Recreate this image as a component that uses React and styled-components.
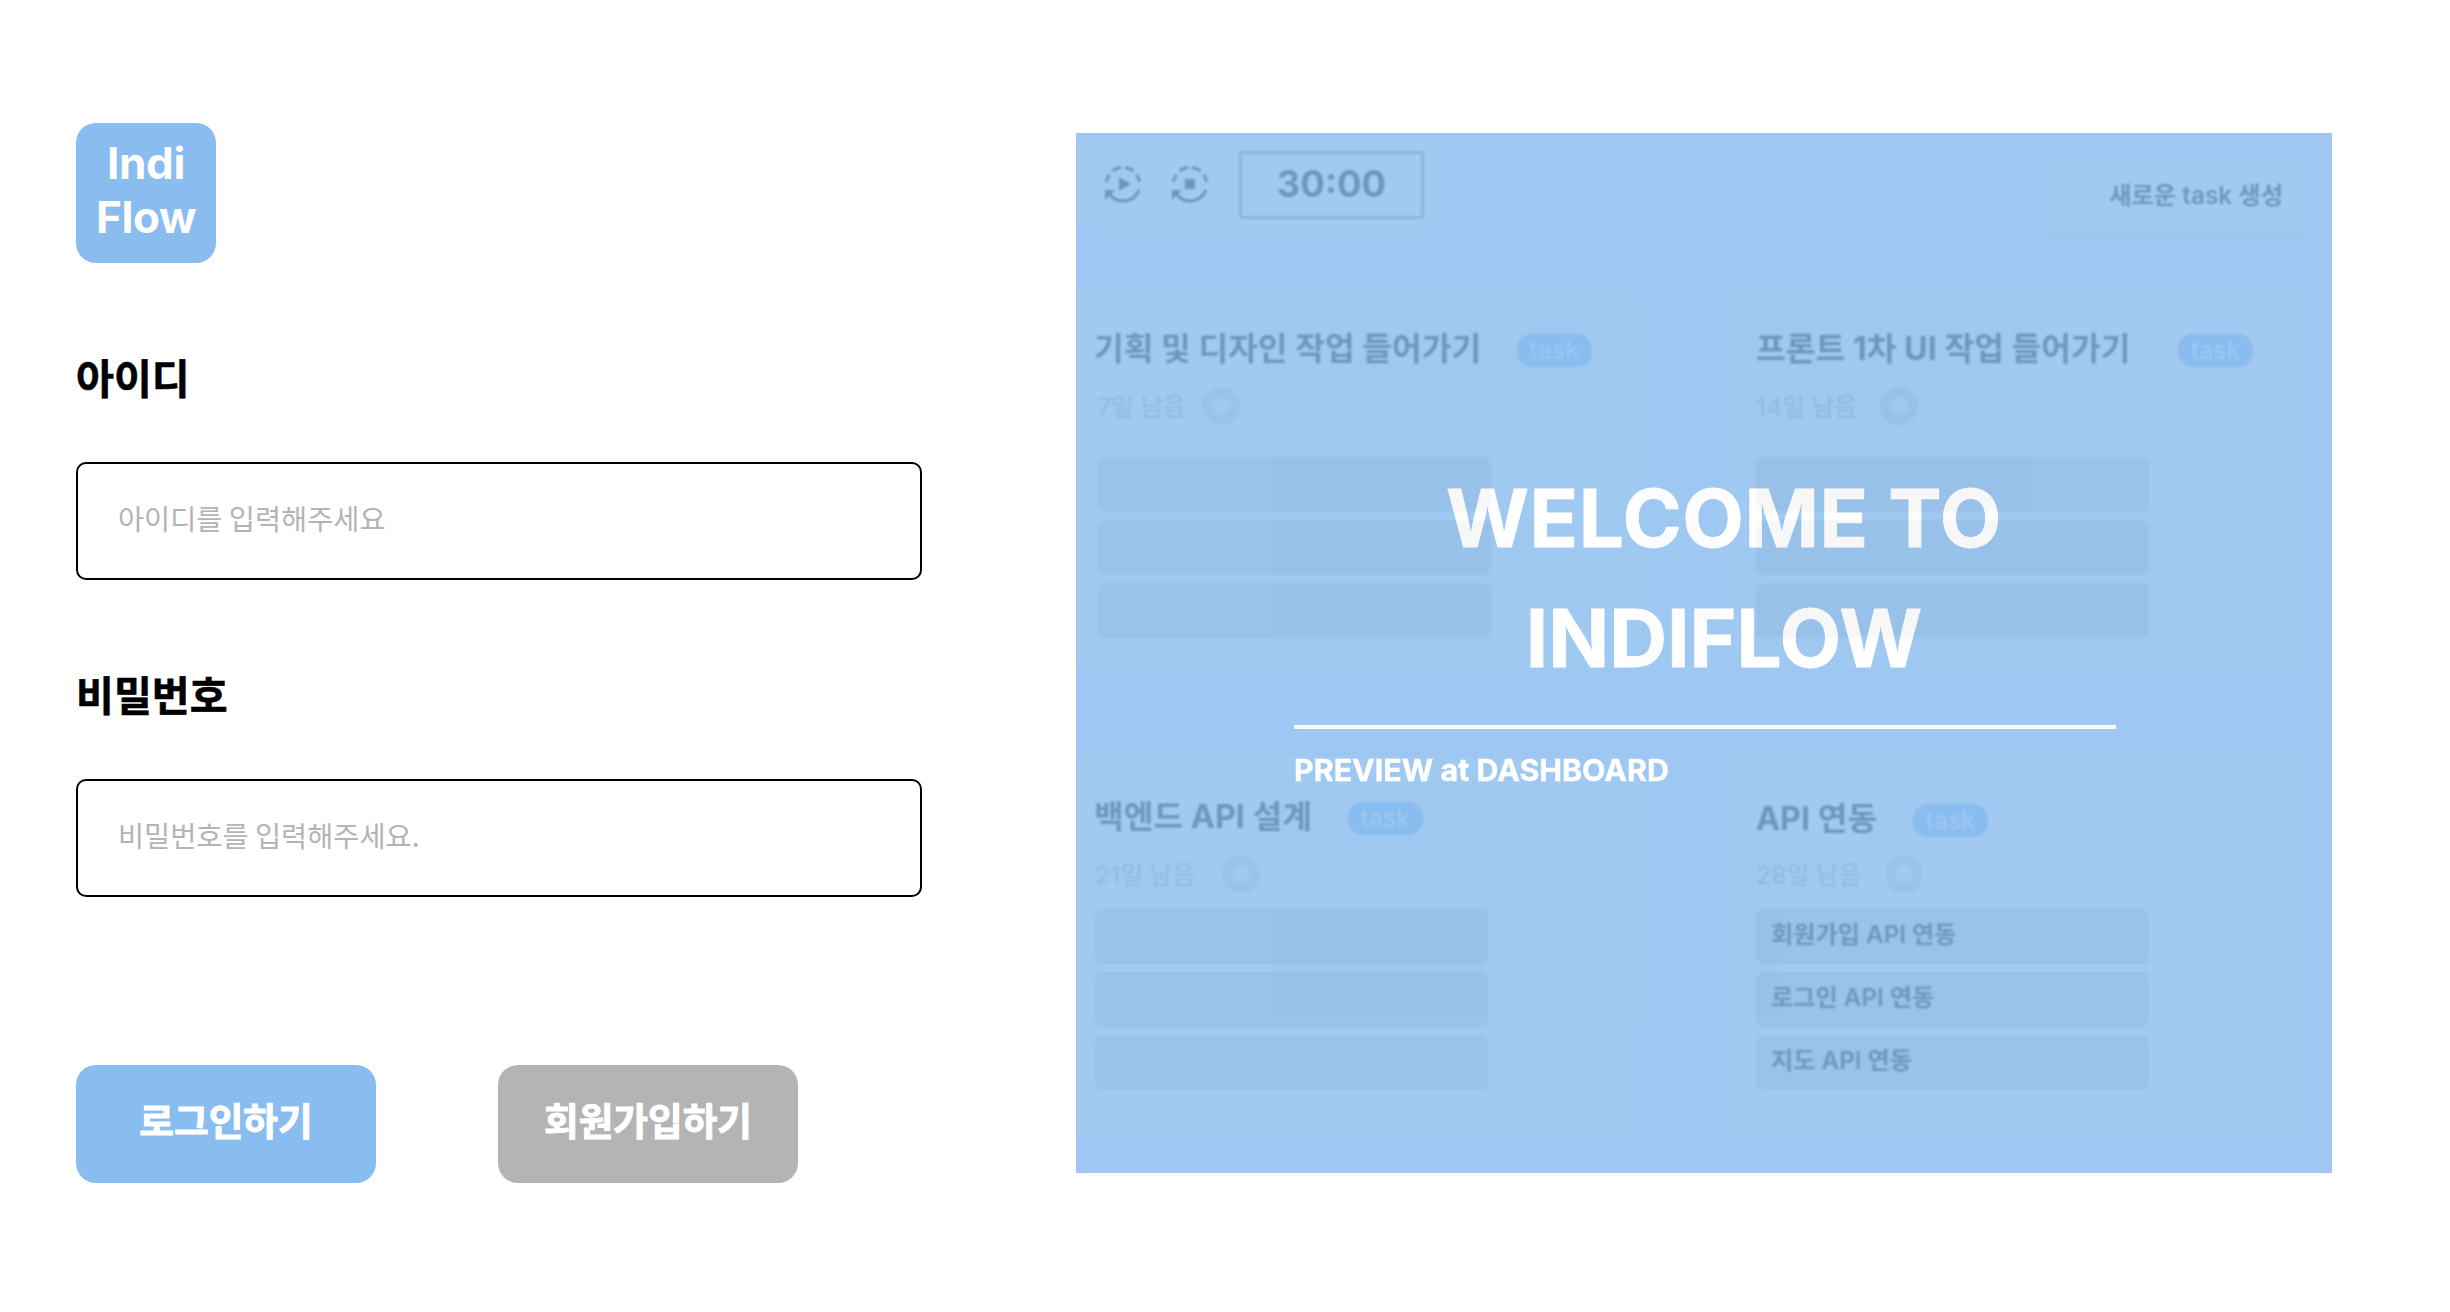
import React from 'react';
import styled, { createGlobalStyle } from 'styled-components';

const blue = '#89bcef';
const kr = `"Noto Sans CJK KR", sans-serif`;
const latin = `Inter, "Noto Sans CJK KR", sans-serif`;

const Global = createGlobalStyle`
  * { box-sizing: border-box; }
  body { margin: 0; background: #fff; font-family: ${kr}; }
  h1, h2, p { margin: 0; }
`;

const Page = styled.main`
  display: flex;
  width: 2450px;
  height: 1312px;
  padding: 123px 118px 0 76px;
  justify-content: space-between;
  align-items: flex-start;
`;

const Form = styled.form`
  width: 846px;
  display: flex;
  flex-direction: column;
`;

const Logo = styled.div`
  width: 140px;
  height: 140px;
  border-radius: 20px;
  background: ${blue};
  color: #fff;
  padding-top: 13px;
  display: flex;
  flex-direction: column;
  align-items: center;
`;

const LogoLine = styled.span`
  height: 54px;
  font: 700 44px/54px Inter, sans-serif;
  letter-spacing: -0.4px;
`;

const Field = styled.label`
  display: flex;
  flex-direction: column;
  margin-top: ${(p) => p.$top}px;
`;

const FieldName = styled.span`
  font: 700 41.2px/60px ${kr};
  height: 60px;
  margin-bottom: 56px;
  -webkit-text-stroke: 0.6px currentColor;
`;

const Input = styled.input`
  width: 846px;
  height: 118px;
  border: 2px solid #000;
  border-radius: 10px;
  padding: 0 40px 7px;
  font: 400 28.4px/44px ${kr};
  outline: none;
  &::placeholder { color: #b4b4b4; opacity: 1; }
`;

const Actions = styled.div`
  display: flex;
  gap: 122px;
  margin-top: 168px;
`;

const Button = styled.button`
  width: 300px;
  height: 118px;
  border: 0;
  border-radius: 20px;
  padding: 0 0 10px;
  background: ${(p) => p.$color};
  color: #fff;
  font: 700 37.7px/56px ${kr};
  -webkit-text-stroke: 1px currentColor;
`;

const Preview = styled.section`
  display: grid;
  width: 1256px;
  height: 1040px;
  margin-top: 10px;
  overflow: hidden;
  background: #f3f4fd;
  > * { grid-area: 1 / 1; }
`;

const Dashboard = styled.div`
  height: 1040px;
  filter: blur(0.8px);
  display: flex;
  flex-direction: column;
  font-family: ${latin};
  padding-right: 29px;
`;

const TopBar = styled.div`
  display: flex;
  justify-content: space-between;
  align-items: flex-start;
  height: 154px;
`;

const Timer = styled.div`
  display: flex;
  align-items: center;
  width: 361px;
  height: 90px;
  margin-top: 7px;
  padding-left: 28px;
  background: #fff;
  border-radius: 0 15px 15px 0;
  box-shadow: 0 0 4px rgba(0, 0, 60, 0.06);
  svg { margin: 0 28.5px 2px 0; flex: none; }
`;

const Clock = styled.div`
  width: 185px;
  height: 68px;
  border: 3px solid #999;
  border-radius: 3px;
  font: 700 36.4px/61px Inter, sans-serif;
  text-align: center;
  margin-left: 2px;
`;

const NewTask = styled.div`
  width: 261px;
  height: 70px;
  margin-top: 29px;
  padding: 0 20px 8px 0;
  display: flex;
  align-items: center;
  justify-content: flex-end;
  background: #fff;
  border-radius: 8px;
  box-shadow: 0 4px 4px rgba(0, 0, 60, 0.06);
  font-size: 24.3px;
  font-weight: 600;
  white-space: nowrap;
`;

const Cards = styled.div`
  display: grid;
  grid-template-columns: 565px 584px;
  grid-template-rows: 382px 384px;
  gap: 87px 78px;
`;

const Card = styled.article`
  background: #fff;
  border-radius: ${(p) => (p.$cut ? '0 20px 20px 0' : '20px')};
  box-shadow: 0 0 6px rgba(0, 0, 60, 0.05);
  padding: ${(p) => p.$top}px 0 0 ${(p) => (p.$cut ? 18 : 37)}px;
`;

const CardHead = styled.div`
  display: flex;
  align-items: center;
  height: 40px;
  gap: ${(p) => p.$gap}px;
`;

const CardTitle = styled.h2`
  width: ${(p) => p.$w}px;
  padding-top: 2px;
  font-size: 32.3px;
  line-height: 40px;
  font-weight: 700;
  white-space: nowrap;
`;

const Tag = styled.span`
  width: 75px;
  height: 33px;
  border-radius: 15px;
  background: ${blue};
  color: #fff;
  font: 400 25px/32px Inter, sans-serif;
  text-align: center;
  margin-top: 4px;
`;

const Due = styled.div`
  display: flex;
  align-items: center;
  height: 38px;
  margin-top: ${(p) => p.$top}px;
  padding-left: ${(p) => p.$indent}px;
  color: #b4b4b4;
  font-size: 24.7px;
  font-weight: 500;
`;

const DueText = styled.span`
  width: ${(p) => p.$w}px;
  padding-bottom: 3px;
  white-space: nowrap;
`;

const Ring = styled.i`
  width: 38px;
  height: 38px;
  border: 10px solid #d9d9d9;
  border-radius: 50%;
`;

const Rows = styled.div`
  display: flex;
  flex-direction: column;
  gap: 8px;
  margin-top: ${(p) => p.$top}px;
  margin-left: ${(p) => p.$indent}px;
`;

const Row = styled.div`
  width: 393px;
  height: 55px;
  border-radius: 7px;
  background: #d9d9d9;
  padding-left: 15px;
  font-size: 24.2px;
  font-weight: 600;
  line-height: 51px;
`;

const Overlay = styled.div`
  z-index: 1;
  opacity: 0.8;
  background: ${blue};
  color: #fff;
  font-family: Inter, sans-serif;
  font-weight: 700;
  padding: 325px 216px 0 218px;
`;

const Welcome = styled.h1`
  font-size: 80px;
  line-height: 120px;
  text-align: center;
  padding-left: 38px;
  -webkit-text-stroke: 0.8px currentColor;
`;

const WelcomeLine = styled.span`
  display: block;
  letter-spacing: ${(p) => p.$spacing}px;
`;

const Rule = styled.div`
  height: 4px;
  margin-top: 27px;
  background: #fff;
`;

const Caption = styled.p`
  font-size: 30.4px;
  line-height: 36px;
  margin-top: 23px;
  -webkit-text-stroke: 0.4px currentColor;
`;

const CycleIcon = ({ children }) => (
  <svg width="38" height="38" viewBox="0 0 38 38" fill="none" stroke="#000" strokeWidth="3">
    <path d="M2.5 17A17 17 0 0 1 5.5 9.5M8.5 6A17 17 0 0 1 17 2.4M21 2.4A17 17 0 0 1 29.5 6M32.5 9.5A17 17 0 0 1 35.5 17" />
    <path d="M35 25A17 17 0 0 1 5.5 29" />
    <path d="M1 25h10l-10 10z" fill="#000" stroke="none" />
    {children}
  </svg>
);

const cards = [
  { title: '기획 및 디자인 작업 들어가기', w: 387, gap: 36, due: '7일 남음', dueW: 105, cut: true, top: 41, indent: 3, dueTop: 19, rowsTop: 32, rowIndent: 3.5, rows: ['', '', ''] },
  { title: '프론트 1차 UI 작업 들어가기', w: 374, gap: 48, due: '14일 남음', dueW: 124, top: 41, indent: 0, dueTop: 19, rowsTop: 32, rowIndent: 0, rows: ['', '', ''] },
  { title: '백엔드 API 설계', w: 218, gap: 36, due: '21일 남음', dueW: 127, cut: true, top: 40, indent: 1, dueTop: 19, rowsTop: 16, rowIndent: 0.5, rows: ['', '', ''] },
  { title: 'API 연동', w: 121, gap: 36, due: '28일 남음', dueW: 129, top: 42, indent: 0, dueTop: 17, rowsTop: 16, rowIndent: 0, rows: ['회원가입 API 연동', '로그인 API 연동', '지도 API 연동'] },
];

export default function App() {
  return (
    <>
      <Global />
      <Page>
        <Form>
          <Logo>
            <LogoLine>Indi</LogoLine>
            <LogoLine>Flow</LogoLine>
          </Logo>
          <Field $top={83}>
            <FieldName>아이디</FieldName>
            <Input placeholder="아이디를 입력해주세요" />
          </Field>
          <Field $top={83}>
            <FieldName>비밀번호</FieldName>
            <Input placeholder="비밀번호를 입력해주세요." />
          </Field>
          <Actions>
            <Button type="button" $color={blue}>로그인하기</Button>
            <Button type="button" $color="#b4b4b4">회원가입하기</Button>
          </Actions>
        </Form>
        <Preview>
          <Dashboard>
            <TopBar>
              <Timer>
                <CycleIcon><path d="M15 12l12 7-12 7z" fill="#000" stroke="none" /></CycleIcon>
                <CycleIcon><path d="M14 14h10v10H14z" fill="#000" stroke="none" /></CycleIcon>
                <Clock>30:00</Clock>
              </Timer>
              <NewTask>새로운 task 생성</NewTask>
            </TopBar>
            <Cards>
              {cards.map((c) => (
                <Card key={c.title} $cut={c.cut} $top={c.top}>
                  <CardHead $gap={c.gap}>
                    <CardTitle $w={c.w}>{c.title}</CardTitle>
                    <Tag>task</Tag>
                  </CardHead>
                  <Due $top={c.dueTop} $indent={c.indent}>
                    <DueText $w={c.dueW}>{c.due}</DueText>
                    <Ring />
                  </Due>
                  <Rows $top={c.rowsTop} $indent={c.rowIndent}>
                    {c.rows.map((r, i) => <Row key={i}>{r}</Row>)}
                  </Rows>
                </Card>
              ))}
            </Cards>
          </Dashboard>
          <Overlay>
            <Welcome>
              <WelcomeLine $spacing={0.6}>WELCOME TO</WelcomeLine>
              <WelcomeLine $spacing={0}>INDIFLOW</WelcomeLine>
            </Welcome>
            <Rule />
            <Caption>PREVIEW at DASHBOARD</Caption>
          </Overlay>
        </Preview>
      </Page>
    </>
  );
}
